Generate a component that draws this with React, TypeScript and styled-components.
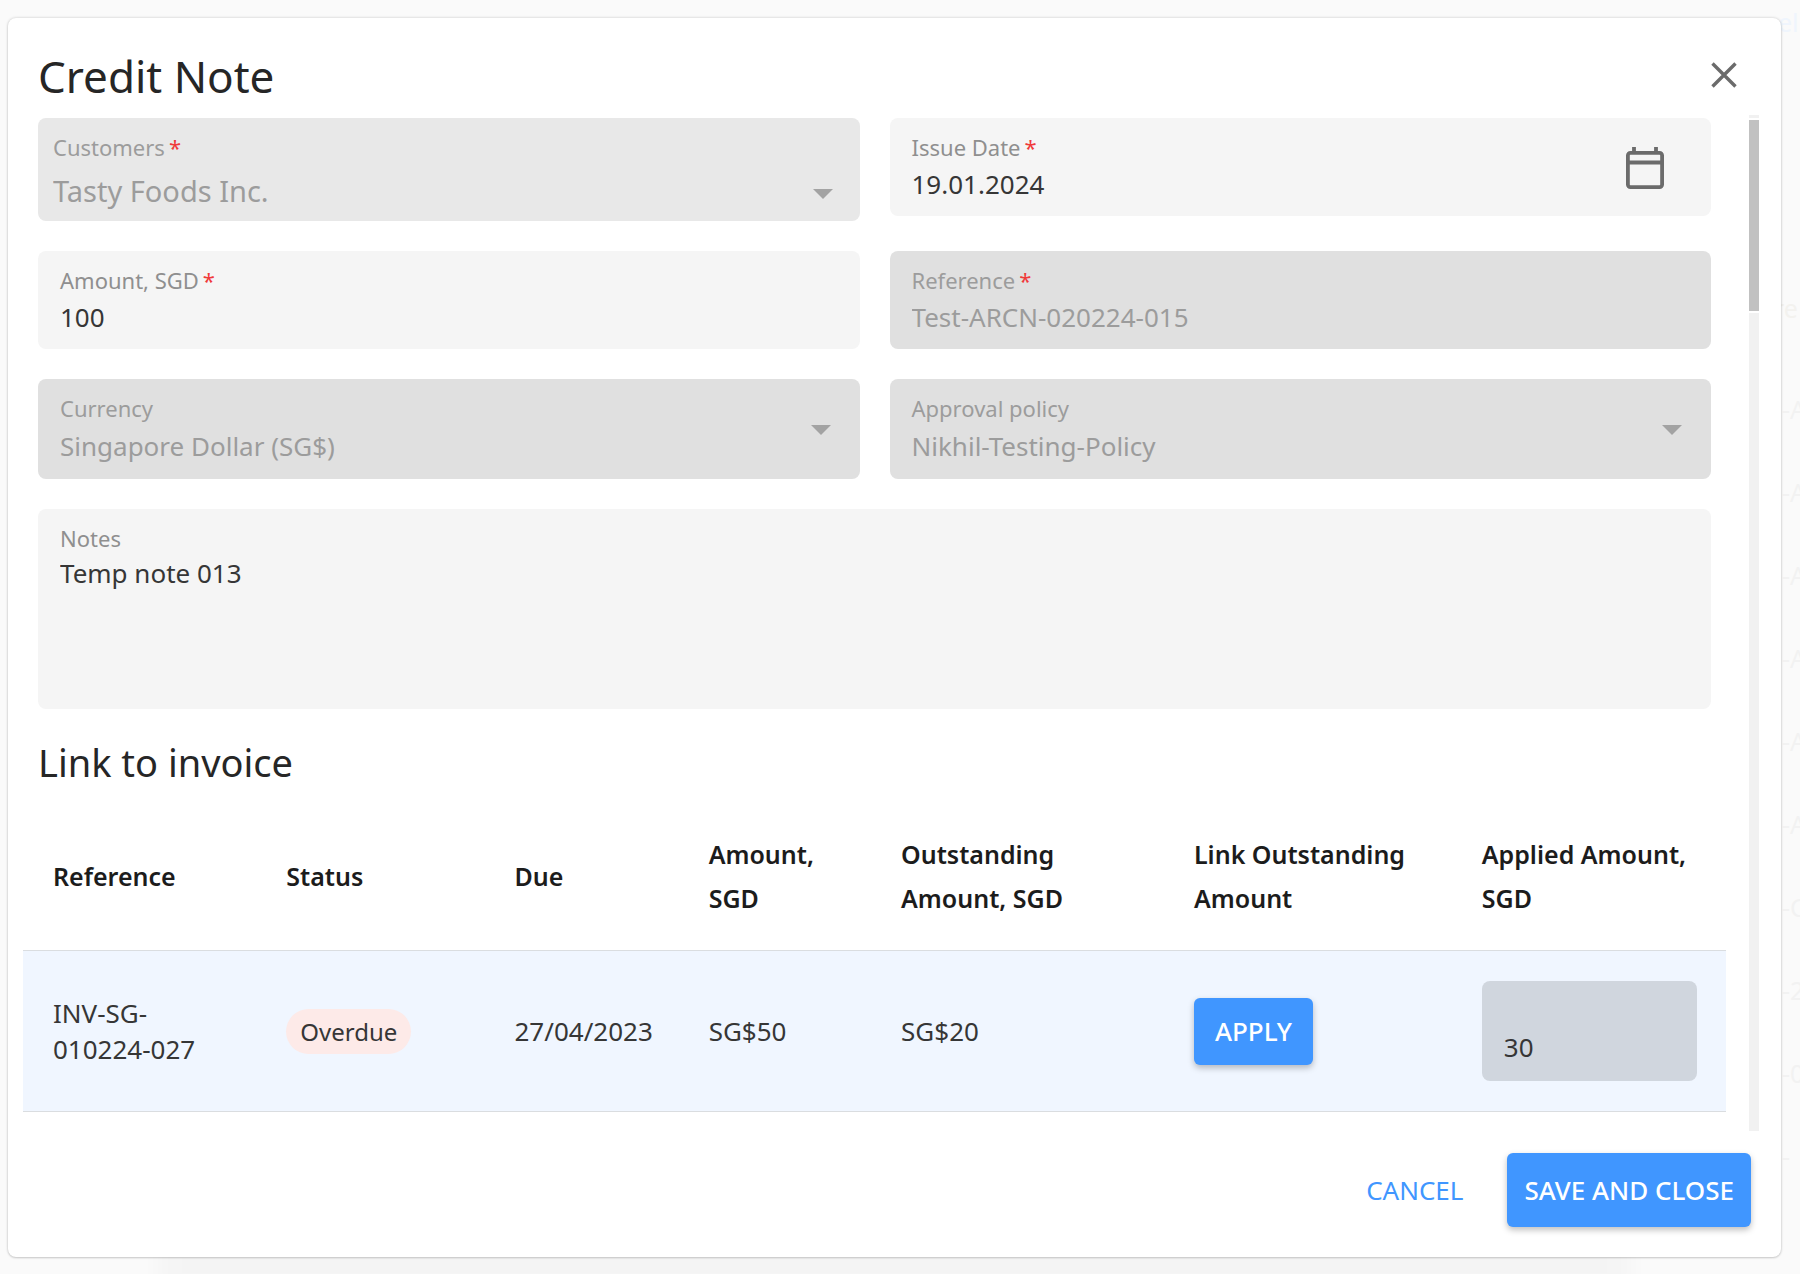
import React from 'react';
import styled, { createGlobalStyle } from 'styled-components';

const GlobalStyle = createGlobalStyle`
  *, *::before, *::after { box-sizing: border-box; }
  body { margin: 0; background: #fafafa; }
  body, button, input, select, textarea { font-family: "Noto Sans", "Open Sans", sans-serif; }
`;

const colors = {
  title: '#262626',
  text: '#363636',
  label: '#8f8f8f',
  disabled: '#9c9c9c',
  soft: '#f5f5f5',
  muted: '#e8e8e8',
  filled: '#e0e0e0',
  primary: '#4096ff',
  required: '#f03a3a',
  line: '#dadde0',
};

const Page = styled.div`
  position: relative;
  display: flex;
  min-height: 100vh;
  padding: 18px 19px 17px 8px;
`;

const Backdrop = styled.div`
  position: absolute;
  top: 0;
  right: 0;
  bottom: 0;
  width: 26px;
  padding-top: 4px;
  overflow: hidden;
  font-size: 25px;
  line-height: 36px;
  color: #f2f2f2;
`;

const BackdropAction = styled.div`
  padding-left: 4px;
  color: #eff5fd;
`;

const BackdropHeading = styled.div`
  margin: 250px 0 42px;
  color: #f3f2ef;
`;

const BackdropRow = styled.div`
  padding-left: 8px;
  line-height: 83px;
  white-space: nowrap;
`;

const Dialog = styled.section`
  position: relative;
  flex: 1;
  min-width: 0;
  display: flex;
  flex-direction: column;
  padding: 30px 22px 30px 15px;
  background: #fff;
  border-radius: 8px;
  box-shadow: 0 0 3px rgba(0, 0, 0, 0.2), 0 1px 2px rgba(0, 0, 0, 0.12), 0 190px 20px -150px rgba(0, 0, 0, 0.025);
`;

const Header = styled.header`
  display: flex;
  justify-content: space-between;
  align-items: flex-start;
  height: 67px;
  padding: 0 13px 0 15px;
`;

const Title = styled.h1`
  margin: 0;
  font-size: 44px;
  font-weight: 400;
  line-height: 56px;
  color: ${colors.title};
`;

const IconButton = styled.button`
  display: flex;
  align-items: center;
  justify-content: center;
  width: 44px;
  height: 44px;
  padding: 0;
  border: 0;
  background: none;
  color: #6b6b6b;
  cursor: pointer;
`;

const CloseButton = styled(IconButton)`
  margin: 5px 0 0;
`;

const Body = styled.div`
  flex: 1;
  display: flex;
  gap: 23px;
  min-height: 0;
`;

const Content = styled.div`
  flex: 1;
  min-width: 0;
  padding-top: 3px;
`;

const Scrollbar = styled.div`
  width: 10px;
  padding: 5px 0;
  background: #f1f1f1;
`;

const Thumb = styled.div`
  height: 19%;
  background: #c1c1c1;
  box-shadow: 0 0 0 2px #fff;
`;

const Form = styled.form`
  display: grid;
  grid-template-columns: 1fr 1fr;
  gap: 30px;
  align-items: start;
  padding: 0 15px;
`;

const Field = styled.div<{ $bg: string; $inset?: number; $height: number; $wide?: boolean }>`
  position: relative;
  display: flex;
  flex-direction: column;
  height: ${(p) => p.$height}px;
  padding: 13px ${(p) => p.$inset ?? 22}px 0;
  border-radius: 8px;
  background: ${(p) => p.$bg};
  grid-column: ${(p) => (p.$wide ? '1 / -1' : 'auto')};
`;

const Label = styled.label<{ $disabled?: boolean }>`
  font-size: 22px;
  line-height: 32px;
  color: ${(p) => (p.$disabled ? colors.disabled : colors.label)};
`;

const Star = styled.span`
  margin-left: 4px;
  color: ${colors.required};
`;

const inputStyle = `
  width: 100%;
  margin: 0;
  padding: 0;
  border: 0;
  outline: 0;
  background: none;
  appearance: none;
  opacity: 1;
  font-weight: 400;
`;

const TextInput = styled.input`
  ${inputStyle}
  height: 42px;
  font-size: 26px;
  line-height: 42px;
  color: ${colors.text};
  &:disabled { color: ${colors.disabled}; }
`;

const Select = styled.select<{ $large?: boolean }>`
  ${inputStyle}
  height: ${(p) => (p.$large ? 56 : 44)}px;
  font-size: ${(p) => (p.$large ? 29 : 26)}px;
  line-height: ${(p) => (p.$large ? 56 : 44)}px;
  color: ${colors.text};
  &:disabled { color: ${colors.disabled}; }
`;

const TextArea = styled.textarea`
  ${inputStyle}
  flex: 1;
  resize: none;
  font-size: 26px;
  line-height: 38px;
  color: ${colors.text};
`;

const Caret = styled.span<{ $low?: boolean }>`
  position: absolute;
  right: ${(p) => (p.$low ? 27 : 29)}px;
  top: ${(p) => (p.$low ? 71 : 46)}px;
  border: solid transparent;
  border-width: 10px 10px 0;
  border-top-color: #a3a3a3;
`;

const CalendarButton = styled(IconButton)`
  position: absolute;
  right: 44px;
  top: 28px;
`;

const SectionTitle = styled.h2`
  margin: 28px 15px 0;
  font-size: 38px;
  font-weight: 400;
  line-height: 50px;
  color: ${colors.title};
`;

const Table = styled.table`
  width: 100%;
  margin-top: 15px;
  table-layout: fixed;
  border-collapse: separate;
  border-spacing: 0;
  text-align: left;
  color: ${colors.text};
`;

const Col = styled.col<{ $w: number }>`
  width: ${(p) => p.$w}%;
`;

const HeadCell = styled.th`
  height: 149px;
  padding: 0 26px 1px 30px;
  border-bottom: 1px solid ${colors.line};
  font-size: 25px;
  font-weight: 600;
  line-height: 44px;
  color: #1c1c1c;
`;

const Cell = styled.td`
  height: 161px;
  padding: 0 29px 0 30px;
  border-bottom: 1px solid ${colors.line};
  background: #f0f6ff;
  font-size: 26px;
  line-height: 36px;
`;

const Pill = styled.span`
  display: inline-block;
  padding: 0 14px;
  border-radius: 23px;
  background: #fdeae8;
  font-size: 24px;
  line-height: 45px;
`;

const AmountInput = styled.input`
  ${inputStyle}
  display: block;
  height: 100px;
  padding: 32px 22px 0;
  border-radius: 8px;
  background: #d0d6de;
  font-size: 26px;
  color: ${colors.text};
`;

const Button = styled.button<{ $text?: boolean; $tall?: boolean }>`
  height: ${(p) => (p.$tall ? 74 : 67)}px;
  padding: 0 ${(p) => (p.$tall ? 17 : 21)}px;
  border: 0;
  border-radius: 6px;
  background: ${(p) => (p.$text ? 'none' : colors.primary)};
  box-shadow: ${(p) => (p.$text ? 'none' : '0 3px 6px rgba(0, 0, 0, 0.25)')};
  color: ${(p) => (p.$text ? colors.primary : '#fff')};
  font-size: 26px;
  font-weight: ${(p) => (p.$text ? 400 : 500)};
  cursor: pointer;
`;

const Footer = styled.footer`
  display: flex;
  justify-content: flex-end;
  gap: 27px;
  padding: 22px 8px 0 0;
`;

const CloseIcon = () => (
  <svg width="26" height="26" viewBox="0 0 26 26" fill="none" stroke="currentColor" strokeWidth="3.4">
    <path d="M1.5 1.5l23 23M24.5 1.5l-23 23" />
  </svg>
);

const CalendarIcon = () => (
  <svg width="38" height="42" viewBox="0 0 38 42" fill="none" stroke="currentColor" strokeWidth="3.8">
    <rect x="1.9" y="5.9" width="34.2" height="34.2" rx="2.5" />
    <path d="M2 15.5h34M8 0v6M30 0v6" />
  </svg>
);

const columns = [
  { name: 'Reference', width: 13.7 },
  { name: 'Status', width: 13.4 },
  { name: 'Due', width: 11.4 },
  { name: 'Amount, SGD', width: 11.3 },
  { name: 'Outstanding Amount, SGD', width: 17.2 },
  { name: 'Link Outstanding Amount', width: 16.9 },
  { name: 'Applied Amount, SGD', width: 16.1 },
];

const backdropRows = ['-A', '-A', '-A', '-A', '-A', '-A', '-C', '-2', '-0', '-'];

export default function App() {
  return (
    <Page>
      <GlobalStyle />
      <Backdrop aria-hidden="true">
        <BackdropAction>el</BackdropAction>
        <BackdropHeading>re</BackdropHeading>
        {backdropRows.map((text, i) => <BackdropRow key={i}>{text}</BackdropRow>)}
      </Backdrop>
      <Dialog role="dialog" aria-labelledby="title">
        <Header>
          <Title id="title">Credit Note</Title>
          <CloseButton type="button" aria-label="Close"><CloseIcon /></CloseButton>
        </Header>
        <Body>
          <Content>
            <Form>
              <Field $bg={colors.muted} $inset={15} $height={103}>
                <Label htmlFor="customer" $disabled>Customers<Star>*</Star></Label>
                <Select id="customer" disabled $large><option>Tasty Foods Inc.</option></Select>
                <Caret $low />
              </Field>
              <Field $bg={colors.soft} $height={98}>
                <Label htmlFor="date">Issue Date<Star>*</Star></Label>
                <TextInput id="date" defaultValue="19.01.2024" />
                <CalendarButton type="button" aria-label="Pick a date"><CalendarIcon /></CalendarButton>
              </Field>
              <Field $bg={colors.soft} $height={98}>
                <Label htmlFor="amount">Amount, SGD<Star>*</Star></Label>
                <TextInput id="amount" defaultValue="100" />
              </Field>
              <Field $bg={colors.filled} $height={98}>
                <Label htmlFor="reference" $disabled>Reference<Star>*</Star></Label>
                <TextInput id="reference" disabled defaultValue="Test-ARCN-020224-015" />
              </Field>
              <Field $bg={colors.filled} $height={100}>
                <Label htmlFor="currency" $disabled>Currency</Label>
                <Select id="currency" disabled><option>Singapore Dollar (SG$)</option></Select>
                <Caret />
              </Field>
              <Field $bg={colors.filled} $height={100}>
                <Label htmlFor="policy" $disabled>Approval policy</Label>
                <Select id="policy" disabled><option>Nikhil-Testing-Policy</option></Select>
                <Caret />
              </Field>
              <Field $bg={colors.soft} $height={200} $wide>
                <Label htmlFor="notes">Notes</Label>
                <TextArea id="notes" defaultValue="Temp note 013" />
              </Field>
            </Form>
            <SectionTitle>Link to invoice</SectionTitle>
            <Table>
              <colgroup>{columns.map((c) => <Col key={c.name} $w={c.width} />)}</colgroup>
              <thead>
                <tr>{columns.map((c) => <HeadCell key={c.name} scope="col">{c.name}</HeadCell>)}</tr>
              </thead>
              <tbody>
                <tr>
                  <Cell>INV-SG-010224-027</Cell>
                  <Cell><Pill>Overdue</Pill></Cell>
                  <Cell>27/04/2023</Cell>
                  <Cell>SG$50</Cell>
                  <Cell>SG$20</Cell>
                  <Cell><Button type="button">APPLY</Button></Cell>
                  <Cell><AmountInput aria-label="Applied Amount, SGD" defaultValue="30" /></Cell>
                </tr>
              </tbody>
            </Table>
          </Content>
          <Scrollbar><Thumb /></Scrollbar>
        </Body>
        <Footer>
          <Button type="button" $text $tall>CANCEL</Button>
          <Button type="button" $tall>SAVE AND CLOSE</Button>
        </Footer>
      </Dialog>
    </Page>
  );
}
